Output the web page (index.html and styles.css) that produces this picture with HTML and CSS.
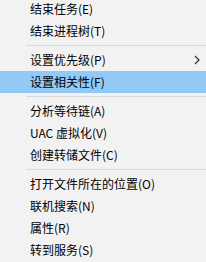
FILE: index.html
```html
<!DOCTYPE html>
<html lang="zh-CN">

<head>
    <meta charset="UTF-8">
    <title>任务管理器菜单</title>
    <link rel="stylesheet" href="styles.css">
</head>

<body>
    <div class="menu">
        <div class="item">结束任务(E)</div>
        <div class="item">结束进程树(T)</div>
        <div class="sep"></div>
        <div class="item">设置优先级(P)
            <svg class="arrow" width="6" height="10" viewBox="0 0 6 10">
                <path d="M1 1 L5 5 L1 9" fill="none" stroke="#333" stroke-width="1.2"/>
            </svg>
        </div>
        <div class="item active">设置相关性(F)</div>
        <div class="sep"></div>
        <div class="item">分析等待链(A)</div>
        <div class="item">UAC 虚拟化(V)</div>
        <div class="item">创建转储文件(C)</div>
        <div class="sep"></div>
        <div class="item">打开文件所在的位置(O)</div>
        <div class="item">联机搜索(N)</div>
        <div class="item">属性(R)</div>
        <div class="item">转到服务(S)</div>
    </div>
</body>

</html>
```

FILE: styles.css
```css
html, body {
    margin: 0;
    background-color: #f2f2f2;
    overflow: hidden;
}

.menu {
    margin-top: -2px;
    font-family: "Microsoft YaHei UI", "Noto Sans CJK SC", sans-serif;
    font-size: 12px;
    color: #000;
}

.item {
    height: 22px;
    line-height: 22px;
    padding-left: 30px;
    position: relative;
}

.item.active {
    background-color: #91c9f7;
}

.arrow {
    position: absolute;
    right: 6px;
    top: 6px;
}

.sep {
    height: 7px;
    margin-left: 26px;
    position: relative;
}

.sep::after {
    content: "";
    position: absolute;
    left: 0;
    right: 0;
    top: 3px;
    height: 1px;
    background-color: #d9d9d9;
}
```
